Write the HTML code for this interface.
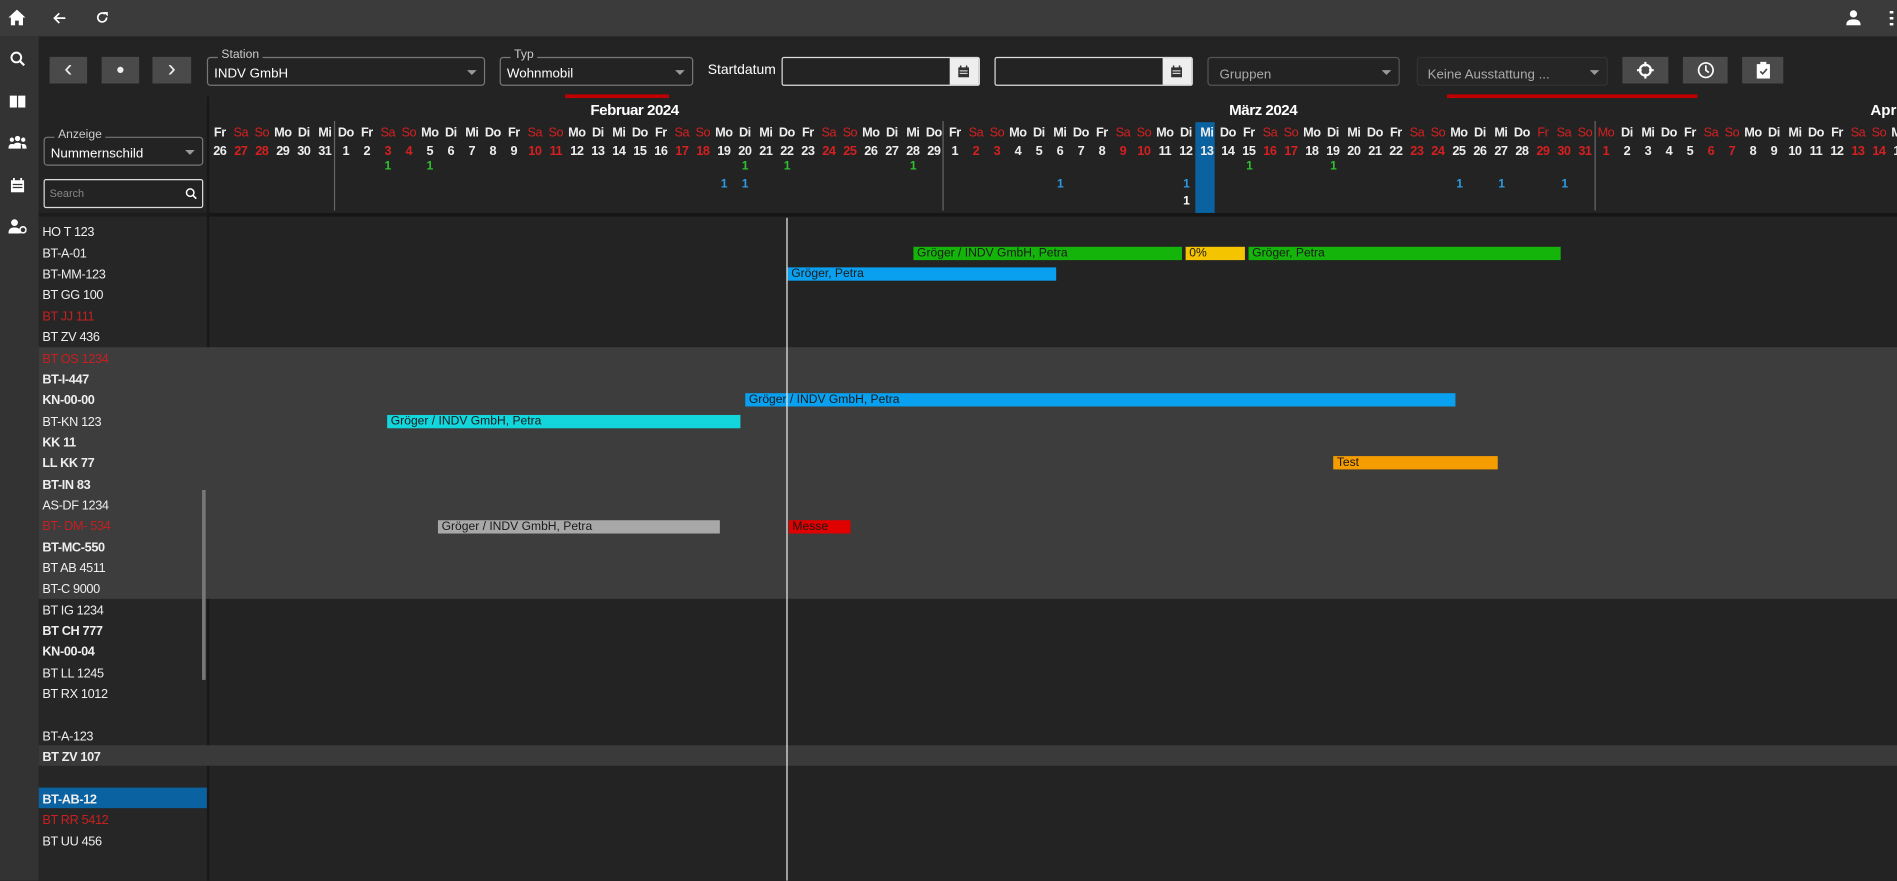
<!DOCTYPE html>
<html><head><meta charset="utf-8"><style>
*{margin:0;padding:0;box-sizing:border-box}
body{width:1897px;height:881px;overflow:hidden;background:#232323;font-family:"Liberation Sans",sans-serif;color:#fff}
#w{position:absolute;left:0;top:0;width:1568px;height:728px;transform:scale(1.20982);transform-origin:0 0;overflow:hidden;background:#232323}
.a{position:absolute}
#top{left:0;top:0;width:1568px;height:30px;background:#3b3b3b}
#side{left:0;top:30px;width:32px;height:698px;background:#333}
.btn{position:absolute;top:47px;height:22px;background:#4a4a4a;color:#eee;font-size:20px;text-align:center;line-height:20px}
.fs{position:absolute;border:1px solid #777;border-radius:3px;height:24px;top:47px;font-size:11px;padding:7px 0 0 5px;color:#fff}
.fs .lg{position:absolute;top:-8px;left:8px;background:#232323;padding:0 3px;font-size:10px;color:#ccc}
.fs .ar{position:absolute;right:6px;top:10px;width:0;height:0;border-left:4px solid transparent;border-right:4px solid transparent;border-top:4px solid #999}
.inp{position:absolute;top:47px;height:24px;border:1px solid #ddd;border-radius:2px;background:#232323}
.inp .cb{position:absolute;right:0;top:0;width:24px;height:22px;background:#eee}
#days{position:absolute;left:173px;top:102px;display:flex}
#days i{display:block;width:17.37px;text-align:center;font-style:normal;font-weight:bold;font-size:10.5px;line-height:15px;letter-spacing:-0.4px;color:#eee}
#days i b{display:block}
#days i.r{color:#d32020;font-weight:normal}
.cnt{position:absolute;width:17.37px;text-align:center;font-size:10px;font-weight:bold}
.row{position:absolute;left:35px;font-size:10.5px;color:#eee;line-height:17px;letter-spacing:-0.3px;margin-top:1.5px}
.row.bd{font-weight:bold}.row.rd{color:#c62020}
.bar{position:absolute;height:11px;font-size:10px;color:#1a1a1a;line-height:11px;padding-left:3px;white-space:nowrap;overflow:hidden;margin-top:1px}
.vl{position:absolute;width:1px;background:#666}
</style></head><body><div id="w">
<div class="a" id="top"></div>
<svg class="a" style="left:7px;top:8px" width="14" height="13" viewBox="0 0 14 13"><path d="M7 0L0 6.5h2V13h3.5V9h3v4H12V6.5h2z" fill="#fff"/></svg>
<svg class="a" style="left:43px;top:9px" width="12" height="12" viewBox="0 0 12 12"><path d="M11 6H2M6 2L2 6l4 4" stroke="#fff" stroke-width="1.4" fill="none"/></svg>
<svg class="a" style="left:79px;top:9px" width="11" height="11" viewBox="0 0 12 12"><path d="M10 6A4 4 0 1 1 8.5 2.8" stroke="#fff" stroke-width="1.5" fill="none"/><path d="M7 1h4v4z" fill="#fff"/></svg>
<svg class="a" style="left:1526px;top:8px" width="12" height="13" viewBox="0 0 12 13"><circle cx="6" cy="3.5" r="3" fill="#fff"/><path d="M0 13c0-4 2.5-5 6-5s6 1 6 5z" fill="#fff"/></svg>
<div class="a" style="left:1562px;top:9px;width:3px;height:12px;background:repeating-linear-gradient(#fff 0 2px,transparent 2px 5px)"></div>
<div class="a" id="side"></div>
<svg class="a" style="left:8px;top:42px" width="13" height="13" viewBox="0 0 13 13"><circle cx="5.5" cy="5.5" r="4" stroke="#fff" stroke-width="1.6" fill="none"/><path d="M8.5 8.5l3.5 3.5" stroke="#fff" stroke-width="1.8"/></svg>
<svg class="a" style="left:8px;top:78px" width="13" height="11" viewBox="0 0 13 11"><path d="M0 1h6v10H0zM7 1h6v10H7z" fill="#fff"/></svg>
<svg class="a" style="left:7px;top:112px" width="15" height="11" viewBox="0 0 15 11"><circle cx="7.5" cy="2.5" r="2.2" fill="#fff"/><circle cx="2.8" cy="3.5" r="1.8" fill="#fff"/><circle cx="12.2" cy="3.5" r="1.8" fill="#fff"/><path d="M3.5 11c0-4 1.5-5 4-5s4 1 4 5zM0 11c0-3 1-4 2.8-4s2 .5 2 1v3zM15 11c0-3-1-4-2.8-4s-2 .5-2 1v3z" fill="#fff"/></svg>
<svg class="a" style="left:9px;top:147px" width="11" height="12" viewBox="0 0 11 12"><path d="M0 2h11v10H0z" fill="#fff"/><path d="M2.5 0v3M8.5 0v3" stroke="#fff" stroke-width="1.5"/><path d="M1.5 5h8v1h-8zM1.5 7.5h8v1h-8z" fill="#333"/></svg>
<svg class="a" style="left:7px;top:181px" width="15" height="12" viewBox="0 0 15 12"><circle cx="5" cy="3" r="2.8" fill="#fff"/><path d="M0 12c0-4 2-5 5-5s5 1 5 5z" fill="#fff"/><circle cx="12" cy="9" r="2.5" stroke="#fff" stroke-width="1.3" fill="none"/></svg>

<div class="btn" style="left:41px;width:31px">&#8249;</div>
<div class="btn" style="left:84px;width:31px;font-size:12px">&#9679;</div>
<div class="btn" style="left:126px;width:32px">&#8250;</div>
<div class="fs" style="left:171px;width:230px"><span class="lg">Station</span>INDV GmbH<span class="ar"></span></div>
<div class="fs" style="left:413px;width:160px"><span class="lg">Typ</span>Wohnmobil<span class="ar"></span></div>
<div class="a" style="left:585px;top:52px;font-size:11.5px">Startdatum</div>
<div class="inp" style="left:646px;width:164px"><div class="cb"><svg style="margin:6px 0 0 7px" width="9" height="10" viewBox="0 0 11 12"><path d="M0 2h11v10H0z" fill="#333"/><path d="M2.5 0v3M8.5 0v3" stroke="#333" stroke-width="1.5"/><path d="M1.5 5h8v1h-8zM1.5 7.5h8v1h-8z" fill="#eee"/></svg></div></div>
<div class="inp" style="left:822px;width:164px"><div class="cb"><svg style="margin:6px 0 0 7px" width="9" height="10" viewBox="0 0 11 12"><path d="M0 2h11v10H0z" fill="#333"/><path d="M2.5 0v3M8.5 0v3" stroke="#333" stroke-width="1.5"/><path d="M1.5 5h8v1h-8zM1.5 7.5h8v1h-8z" fill="#eee"/></svg></div></div>
<div class="fs" style="left:998px;width:159px;color:#aaa;border-color:#555"><span style="position:relative;top:1px;left:4px">Gruppen</span><span class="ar"></span></div>
<div class="fs" style="left:1171px;width:158px;color:#aaa;border-color:#333;background:#262626"><span style="position:relative;top:1px;left:3px">Keine Ausstattung ...</span><span class="ar"></span></div>
<div class="btn" style="left:1341px;width:38px"><svg style="margin-top:4px" width="14" height="14" viewBox="0 0 14 14"><circle cx="7" cy="7" r="4.5" stroke="#fff" stroke-width="1.8" fill="none"/><path d="M7 0v4M7 10v4M0 7h4M10 7h4" stroke="#fff" stroke-width="1.8"/></svg></div>
<div class="btn" style="left:1391px;width:37px"><svg style="margin-top:4px" width="14" height="14" viewBox="0 0 14 14"><circle cx="7" cy="7" r="6" stroke="#fff" stroke-width="1.4" fill="none"/><path d="M7 3v4l2.5 2" stroke="#fff" stroke-width="1.4" fill="none"/></svg></div>
<div class="btn" style="left:1440px;width:34px"><svg style="margin-top:4px" width="11" height="14" viewBox="0 0 11 14"><path d="M0 2h11v12H0z" fill="#fff"/><path d="M3 0h5v3H3z" fill="#fff"/><path d="M3 8l2 2 3.5-4" stroke="#4a4a4a" stroke-width="1.4" fill="none"/></svg></div>
<div class="a" style="left:467px;top:78px;width:86px;height:3px;background:#c00000"></div>
<div class="a" style="left:1196px;top:78px;width:207px;height:3px;background:#c00000"></div>

<div class="fs" style="left:36px;top:113px;width:132px;height:24px"><span class="lg">Anzeige</span>Nummernschild<span class="ar"></span></div>
<div class="a" style="left:36px;top:148px;width:132px;height:24px;border:1px solid #ddd;border-radius:2px;font-size:9px;color:#888;padding:6px 4px">Search<svg style="position:absolute;right:4px;top:6px" width="10" height="10" viewBox="0 0 13 13"><circle cx="5.5" cy="5.5" r="4" stroke="#fff" stroke-width="1.6" fill="none"/><path d="M8.5 8.5l3.5 3.5" stroke="#fff" stroke-width="1.8"/></svg></div>

<div class="a" style="left:171px;top:80px;width:2px;height:648px;background:#181818"></div>
<div class="a" style="left:173px;top:176px;width:1395px;height:3px;background:#161616"></div>
<div class="a" style="left:32px;top:176px;width:139px;height:3px;background:#1c1c1c"></div>
<div class="a" style="left:32px;top:179px;width:139px;height:549px;background:#262626"></div>
<div class="a" style="left:32px;top:287px;width:1536px;height:208px;background:#3d3d3d"></div>
<div class="a" style="left:32px;top:616px;width:1536px;height:17px;background:#3a3a3a"></div>
<div class="a" style="left:32px;top:651px;width:139px;height:17px;background:#0a62a0"></div>
<div class="a" style="left:167px;top:405px;width:3px;height:157px;background:#777"></div>

<div class="a" style="left:488px;top:84px;font-size:12.5px;font-weight:bold;letter-spacing:-0.4px">Februar 2024</div>
<div class="a" style="left:1016px;top:84px;font-size:12.5px;font-weight:bold;letter-spacing:-0.4px">März 2024</div>
<div class="a" style="left:1546px;top:84px;font-size:12.5px;font-weight:bold">Apr</div>
<div class="vl" style="left:276px;top:100px;height:74px"></div>
<div class="vl" style="left:779px;top:100px;height:74px"></div>
<div class="vl" style="left:1318px;top:100px;height:74px"></div>
<div class="a" style="left:988px;top:101px;width:16px;height:75px;background:#0a62a0"></div>

<div id="days" style="top:102.5px">
<i>Fr<b>26</b></i><i class="r">Sa<b>27</b></i><i class="r">So<b>28</b></i><i>Mo<b>29</b></i><i>Di<b>30</b></i><i>Mi<b>31</b></i>
<i>Do<b>1</b></i><i>Fr<b>2</b></i><i class="r">Sa<b>3</b></i><i class="r">So<b>4</b></i><i>Mo<b>5</b></i><i>Di<b>6</b></i><i>Mi<b>7</b></i><i>Do<b>8</b></i><i>Fr<b>9</b></i><i class="r">Sa<b>10</b></i><i class="r">So<b>11</b></i><i>Mo<b>12</b></i><i>Di<b>13</b></i><i>Mi<b>14</b></i><i>Do<b>15</b></i><i>Fr<b>16</b></i><i class="r">Sa<b>17</b></i><i class="r">So<b>18</b></i><i>Mo<b>19</b></i><i>Di<b>20</b></i><i>Mi<b>21</b></i><i>Do<b>22</b></i><i>Fr<b>23</b></i><i class="r">Sa<b>24</b></i><i class="r">So<b>25</b></i><i>Mo<b>26</b></i><i>Di<b>27</b></i><i>Mi<b>28</b></i><i>Do<b>29</b></i>
<i>Fr<b>1</b></i><i class="r">Sa<b>2</b></i><i class="r">So<b>3</b></i><i>Mo<b>4</b></i><i>Di<b>5</b></i><i>Mi<b>6</b></i><i>Do<b>7</b></i><i>Fr<b>8</b></i><i class="r">Sa<b>9</b></i><i class="r">So<b>10</b></i><i>Mo<b>11</b></i><i>Di<b>12</b></i><i>Mi<b>13</b></i><i>Do<b>14</b></i><i>Fr<b>15</b></i><i class="r">Sa<b>16</b></i><i class="r">So<b>17</b></i><i>Mo<b>18</b></i><i>Di<b>19</b></i><i>Mi<b>20</b></i><i>Do<b>21</b></i><i>Fr<b>22</b></i><i class="r">Sa<b>23</b></i><i class="r">So<b>24</b></i><i>Mo<b>25</b></i><i>Di<b>26</b></i><i>Mi<b>27</b></i><i>Do<b>28</b></i><i class="r">Fr<b>29</b></i><i class="r">Sa<b>30</b></i><i class="r">So<b>31</b></i>
<i class="r">Mo<b>1</b></i><i>Di<b>2</b></i><i>Mi<b>3</b></i><i>Do<b>4</b></i><i>Fr<b>5</b></i><i class="r">Sa<b>6</b></i><i class="r">So<b>7</b></i><i>Mo<b>8</b></i><i>Di<b>9</b></i><i>Mi<b>10</b></i><i>Do<b>11</b></i><i>Fr<b>12</b></i><i class="r">Sa<b>13</b></i><i class="r">So<b>14</b></i><i>Mo<b>15</b></i>
</div>

<div class="cnt" style="left:311.96px;top:132px;color:#2fbf2f">1</div>
<div class="cnt" style="left:346.7px;top:132px;color:#2fbf2f">1</div>
<div class="cnt" style="left:607.25px;top:132px;color:#2fbf2f">1</div>
<div class="cnt" style="left:641.99px;top:132px;color:#2fbf2f">1</div>
<div class="cnt" style="left:746.2px;top:132px;color:#2fbf2f">1</div>
<div class="cnt" style="left:1024.1px;top:132px;color:#2fbf2f">1</div>
<div class="cnt" style="left:1093.6px;top:132px;color:#2fbf2f">1</div>
<div class="cnt" style="left:589.9px;top:147px;color:#2b9be0">1</div>
<div class="cnt" style="left:607.25px;top:147px;color:#2b9be0">1</div>
<div class="cnt" style="left:867.8px;top:147px;color:#2b9be0">1</div>
<div class="cnt" style="left:972px;top:147px;color:#2b9be0">1</div>
<div class="cnt" style="left:1197.8px;top:147px;color:#2b9be0">1</div>
<div class="cnt" style="left:1232.5px;top:147px;color:#2b9be0">1</div>
<div class="cnt" style="left:1284.7px;top:147px;color:#2b9be0">1</div>
<div class="cnt" style="left:972px;top:161px;color:#fff">1</div>

<div class="row" style="top:182px">HO T 123</div>
<div class="row" style="top:200px">BT-A-01</div>
<div class="row" style="top:217px">BT-MM-123</div>
<div class="row" style="top:234px">BT GG 100</div>
<div class="row rd" style="top:252px">BT JJ 111</div>
<div class="row" style="top:269px">BT ZV 436</div>
<div class="row rd" style="top:287px">BT OS 1234</div>
<div class="row bd" style="top:304px">BT-I-447</div>
<div class="row bd" style="top:321px">KN-00-00</div>
<div class="row" style="top:339px">BT-KN 123</div>
<div class="row bd" style="top:356px">KK 11</div>
<div class="row bd" style="top:373px">LL KK 77</div>
<div class="row bd" style="top:391px">BT-IN 83</div>
<div class="row" style="top:408px">AS-DF 1234</div>
<div class="row rd" style="top:425px">BT- DM- 534</div>
<div class="row bd" style="top:443px">BT-MC-550</div>
<div class="row" style="top:460px">BT AB 4511</div>
<div class="row" style="top:477px">BT-C 9000</div>
<div class="row" style="top:495px">BT IG 1234</div>
<div class="row bd" style="top:512px">BT CH 777</div>
<div class="row bd" style="top:529px">KN-00-04</div>
<div class="row" style="top:547px">BT LL 1245</div>
<div class="row" style="top:564px">BT RX 1012</div>
<div class="row" style="top:599px">BT-A-123</div>
<div class="row bd" style="top:616px">BT ZV 107</div>
<div class="row bd" style="top:651px">BT-AB-12</div>
<div class="row rd" style="top:668px">BT RR 5412</div>
<div class="row" style="top:686px">BT UU 456</div>

<div class="bar" style="left:755px;top:203px;width:222px;background:#14b40a">Gröger / INDV GmbH, Petra</div>
<div class="bar" style="left:980px;top:203px;width:49px;background:#f5c400">0%</div>
<div class="bar" style="left:1032px;top:203px;width:258px;background:#14b40a">Gröger, Petra</div>
<div class="bar" style="left:651px;top:220px;width:222px;background:#0aa0f0">Gröger, Petra</div>
<div class="bar" style="left:616px;top:324px;width:587px;background:#0aa0f0">Gröger / INDV GmbH, Petra</div>
<div class="bar" style="left:320px;top:342px;width:292px;background:#12d6dc">Gröger / INDV GmbH, Petra</div>
<div class="bar" style="left:1102px;top:376px;width:136px;background:#f59c00">Test</div>
<div class="bar" style="left:362px;top:429px;width:233px;background:#a8a8a8">Gröger / INDV GmbH, Petra</div>
<div class="bar" style="left:652px;top:429px;width:51px;background:#e00000">Messe</div>
<div class="a" style="left:650px;top:180px;width:1px;height:548px;background:#eee"></div>
</div></body></html>
